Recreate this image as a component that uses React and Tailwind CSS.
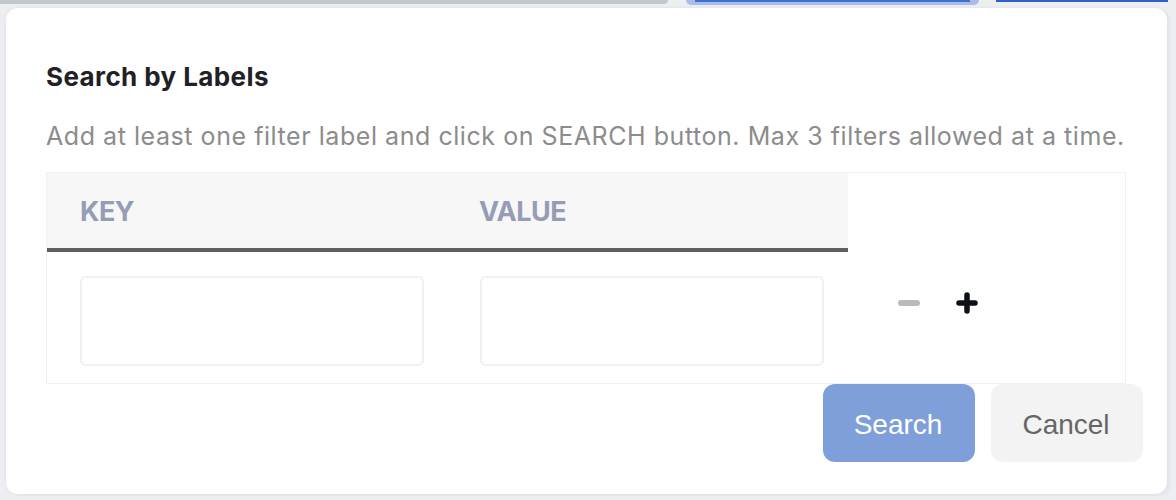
export default function App() {
  return (
    <div className="w-[1176px] h-[500px] bg-[#eceef2] relative overflow-hidden" style={{ fontFamily: "Inter, 'Noto Sans', sans-serif" }}>
      {/* page behind the overlay */}
      <div className="flex items-start h-[8px]">
        <div className="w-[668px] h-[4px] bg-[#c3c8cc] rounded-br-[4px]" />
        <div className="ml-[18px] w-[293px] h-[5px] bg-[#a9bde8] rounded-b-[10px] flex justify-center">
          <div className="w-[275px] h-[2px] bg-[#3f6fd3]" />
        </div>
        <div className="ml-[17px] w-[172px] h-[2px] bg-[#2f62c8]" />
      </div>

      <SearchLabelsModal />
    </div>
  );
}

function SearchLabelsModal() {
  return (
    <div className="absolute left-[6px] top-[8px] w-[1161px] h-[486px] bg-white rounded-[12px] shadow-[0_0_4px_rgba(0,0,0,0.06),4px_2px_0_#e8e9ee] px-[40px] pt-[53px]">
      <h2 className="text-[26px] leading-[32px] font-bold text-[#1f2126] tracking-[0.4px]">Search by Labels</h2>
      <p className="mt-[27px] text-[25px] leading-[32px] text-[#8c8c8c] tracking-[0.55px] whitespace-nowrap">
        Add at least one filter label and click on SEARCH button. Max 3 filters allowed at a time.
      </p>

      <div className="mt-[20px] w-[1080px] border border-[#f0f0f4]">
        <div className="flex">
          <div className="flex w-[801px] h-[79px] bg-[#f7f7f7] border-b-[4px] border-[#5f5f5f] items-center text-[27px] font-bold text-[#959cb6] tracking-[-0.5px]">
            <div className="w-[400px] pl-[33px] pt-[3px]">KEY</div>
            <div className="w-[401px] pl-[32px] pt-[3px]">VALUE</div>
          </div>
        </div>
        <div className="flex h-[131px]">
          <div className="w-[400px] pl-[33px] pt-[24px]">
            <input className="w-[344px] h-[90px] border-2 border-[#efeff4] rounded-[6px] outline-none" />
          </div>
          <div className="w-[401px] pl-[33px] pt-[24px]">
            <input className="w-[344px] h-[90px] border-2 border-[#efeff4] rounded-[6px] outline-none" />
          </div>
          <div className="flex items-center gap-[36px] pl-[50px] h-[102px]">
            <button className="w-[22px] h-[22px] flex items-center">
              <span className="block w-[22px] h-[6px] rounded-[3px] bg-[#bababa]" />
            </button>
            <button className="w-[22px] h-[22px]">
              <svg viewBox="0 0 22 22" width="22" height="22">
                <path d="M11 3v16M3 11h16" stroke="#0d1117" strokeWidth="5.5" strokeLinecap="round" />
              </svg>
            </button>
          </div>
        </div>
      </div>

      <div className="flex justify-end gap-[16px] -mr-[16px]" style={{ fontFamily: "'Liberation Sans', Arial, sans-serif" }}>
        <button className="w-[152px] h-[78px] pt-[3px] pr-[2px] rounded-[12px] bg-[#7f9fdb] text-white text-[28px]">Search</button>
        <button className="w-[152px] h-[78px] pt-[3px] pr-[2px] rounded-[12px] bg-[#f3f3f3] text-[#666666] text-[28px]">Cancel</button>
      </div>
    </div>
  );
}
